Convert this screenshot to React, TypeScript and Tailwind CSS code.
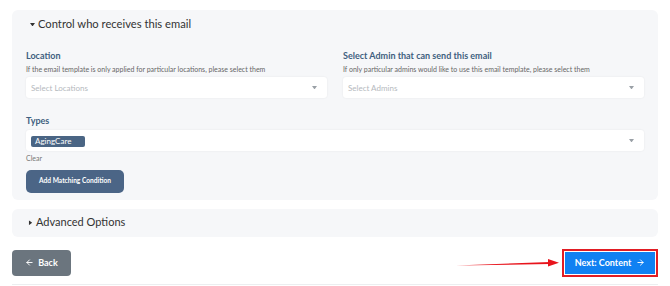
import { ArrowLeft, ArrowRight } from 'lucide-react';

function Caret({ className = '' }: { className?: string }) {
  return (
    <svg className={className} width="5" height="3.5" viewBox="0 0 6 4">
      <path d="M0 0h6L3 4z" fill="currentColor" />
    </svg>
  );
}

function SelectBox({ placeholder, children }: { placeholder?: string; children?: React.ReactNode }) {
  return (
    <div className="flex h-[21px] items-center rounded-[3px] bg-white pl-[5px] pr-[10px] shadow-[0_0_2px_rgba(0,0,0,0.08)]">
      <div className="flex-1 text-[8px] text-[#b5b9be]">{children ?? placeholder}</div>
      <Caret className="text-[#9aa0a6]" />
    </div>
  );
}

export default function App() {
  return (
    <div className="h-[286px] w-[670px] bg-white font-['Lato',sans-serif]">
      <div className="px-[12px] pt-[10px]">
        {/* Control panel */}
        <div className="rounded-[6px] bg-[#f6f7f9] pb-[7px] pl-[14px] pr-[14px] pt-[4px]">
          <div className="flex h-[21px] items-center gap-[3px] pl-[4px] text-[11.2px] text-[#333]">
            <Caret className="text-[#333]" />
            <span>Control who receives this email</span>
          </div>

          <div className="mt-[15px] grid grid-cols-2 gap-[16px]">
            <div>
              <div className="text-[9px] font-bold leading-[12px] text-[#3f5f80]">Location</div>
              <div className="mt-[3px] text-[7px] leading-[8px] text-[#666]">
                If the email template is only applied for particular locations, please select them
              </div>
              <div className="mt-[4px]">
                <SelectBox placeholder="Select Locations" />
              </div>
            </div>
            <div>
              <div className="text-[9px] font-bold leading-[12px] text-[#3f5f80]">Select Admin that can send this email</div>
              <div className="mt-[3px] text-[7px] leading-[8px] text-[#666]">
                If only particular admins would like to use this email template, please select them
              </div>
              <div className="mt-[4px]">
                <SelectBox placeholder="Select Admins" />
              </div>
            </div>
          </div>

          <div className="mt-[17px] text-[9px] font-bold leading-[12px] text-[#3f5f80]">Types</div>
          <div className="mt-[3px]">
            <SelectBox>
              <span className="inline-block rounded-[2px] bg-[#4a6584] py-[1px] pl-[4px] pr-[14px] text-[8px] leading-[9px] text-white">
                AgingCare
              </span>
            </SelectBox>
          </div>
          <div className="mt-[2px] text-[7px] text-[#777]">Clear</div>
          <button className="mt-[6px] flex h-[23px] w-[98px] items-center justify-center rounded-[5px] bg-[#4b6586] text-[6.6px] font-bold text-white">
            Add Matching Condition
          </button>
        </div>

        {/* Advanced options */}
        <div className="mt-[9px] flex h-[28px] items-center gap-[3px] rounded-[6px] bg-[#f6f7f9] pl-[16px] text-[11px] text-[#333]">
          <Caret className="-rotate-90 text-[#333]" />
          <span>Advanced Options</span>
        </div>

        {/* Footer */}
        <div className="mt-[12px] flex items-center justify-between border-b border-[#eceef0] pb-[7px]">
          <button className="flex h-[26px] w-[59px] items-center justify-center gap-[4px] rounded-[4px] bg-[#6b757e] text-[9px] font-bold text-white">
            <ArrowLeft size={9} strokeWidth={2.5} />
            Back
          </button>
          <div className="flex items-center">
            <svg width="104" height="10" viewBox="0 0 104 10" className="mr-[2px]">
              <path d="M0 7.5 L94 4 L94 6 Z" fill="#e8141c" />
              <path d="M92 1 L103 4.8 L92 8.5 Z" fill="#e8141c" />
            </svg>
            <div className="border-[2px] border-[#e11d24] p-[1px]">
              <button className="flex h-[22px] w-[90px] items-center justify-center gap-[5px] bg-[#1081f2] text-[9px] font-bold text-white">
                Next: Content
                <ArrowRight size={9} strokeWidth={2.5} />
              </button>
            </div>
          </div>
        </div>
      </div>
    </div>
  );
}
